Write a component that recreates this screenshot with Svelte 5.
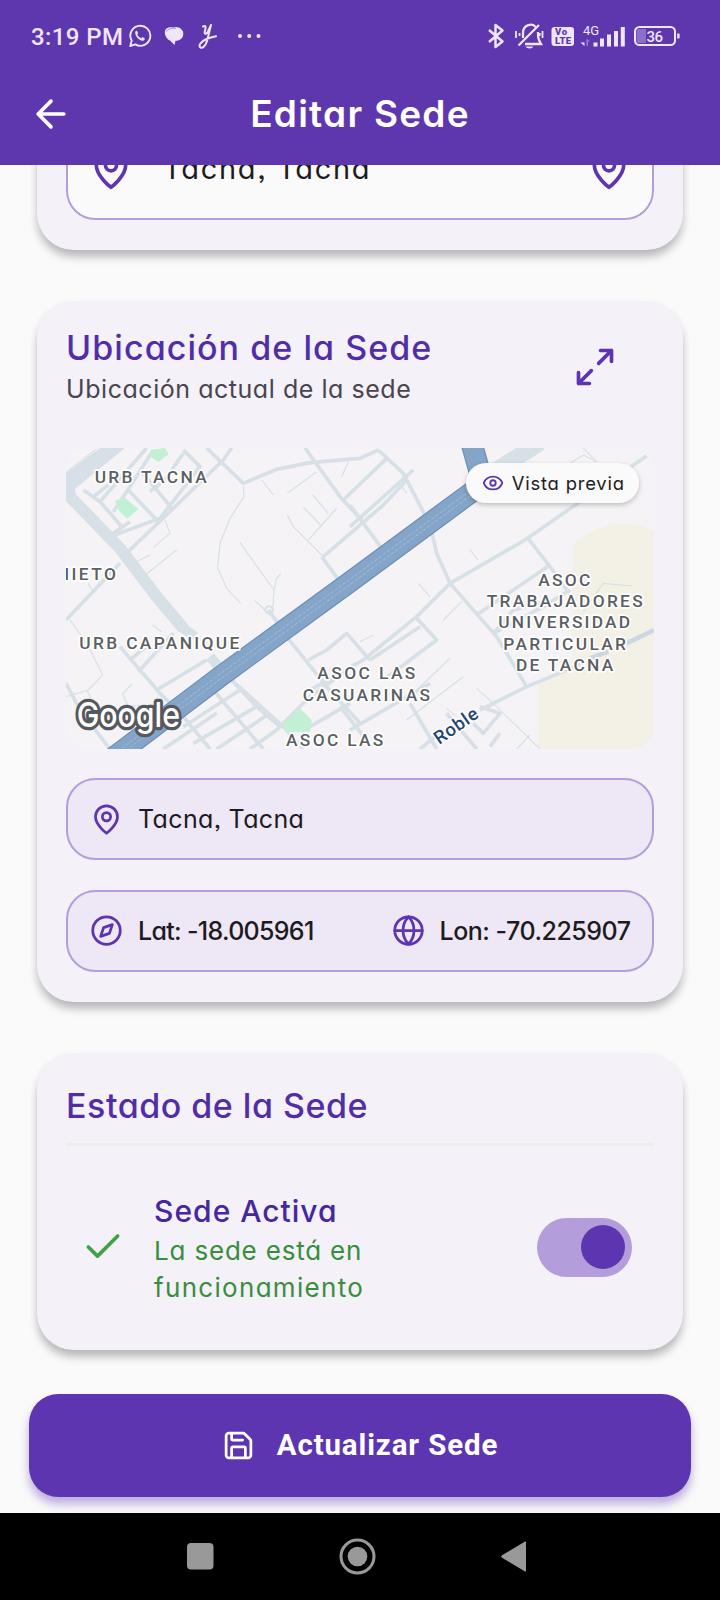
<script>
  const labels = [
    { t: 'URB TACNA', x: 134, y: 160, w: 336 },
    { t: 'URB CAPANIQUE', x: 88, y: 658, w: 480 },
    { t: 'ASOC LAS', x: 802, y: 748, w: 294 },
    { t: 'CASUARINAS', x: 758, y: 812, w: 382 },
    { t: 'ASOC LAS', x: 708, y: 949, w: 292 },
    { t: 'ASOC', x: 1465, y: 467, w: 156 },
    { t: 'TRABAJADORES', x: 1310, y: 531, w: 468 },
    { t: 'UNIVERSIDAD', x: 1345, y: 595, w: 395 },
    { t: 'PARTICULAR', x: 1360, y: 659, w: 368 },
    { t: 'DE TACNA', x: 1398, y: 723, w: 292 },
    { t: 'NIETO', x: 20, y: 451, w: 178 }
  ];

  const streets = [
    'M100 180L150 215L215 290', 'M130 200L175 165', 'M180 320L330 265L450 110L400 60', 'M235 365L520 90L545 54',
    'M150 215L290 54', 'M190 245L240 170L310 60', 'M235 180L320 270', 'M270 120L370 240', 'M300 185L345 150L400 70', 'M175 320L240 275',
    'M470 54L580 160L680 118L780 98L930 85L985 60', 'M765 54L870 200L935 270', 'M820 380L1000 225L1070 150', 'M815 380L870 455',
    'M880 210L1010 85', 'M900 225L995 355', 'M985 60L1060 130L1130 265', 'M900 290L1090 120',
    'M48 570L210 400', 'M545 750L700 890L760 957', 'M210 650L330 790L400 860L480 957', 'M240 690L300 640', 'M265 725L370 610',
    'M320 780L470 690', 'M400 890L570 780', 'M490 780L640 957', 'M340 957L500 850', 'M430 940L620 830', 'M500 957L660 850',
    'M710 620L830 770L930 880', 'M775 690L830 660L890 610L960 690', 'M655 540L685 580', 'M545 750L620 830L690 890', 'M600 957L680 900L780 800L920 700',
    'M780 780L940 690L1100 560L1200 460L1425 330L1590 215L1790 78', 'M960 690L1110 590', 'M1100 565L1160 630L1000 750', 'M1145 305L1160 370L1200 460L1340 620L1430 770',
    'M1430 320L1500 410L1550 480', 'M1280 555L1500 405', 'M1330 610L1480 530L1560 480', 'M1330 610L1390 540L1470 520', 'M1290 840L1430 770L1600 700',
    'M900 900L1020 830L1140 760', 'M780 890L900 820', 'M870 830L950 930', 'M1080 820L1160 957', 'M1290 830L1350 850L1300 910L1270 880',
    'M1110 957L1180 900', 'M1190 850L1280 957', 'M1320 950L1350 910', 'M48 760L90 840L180 957'
  ];

  const lanes = [
    'M580 170L582 200L540 265L510 340L503 415L530 475L572 520', 'M570 338L672 480L668 545', 'M672 480L680 445L692 432', 'M615 512L660 555',
    'M712 255L730 290L820 380', 'M775 330L860 235', 'M760 232L812 285', 'M788 195L835 250', 'M635 150L670 195', 'M712 190L800 125',
    'M345 270L360 310L310 352', 'M285 435L380 360', 'M250 400L300 375', 'M60 570L110 640L158 735L115 780L48 800', 'M115 460L125 480',
    'M245 762L218 792L235 830L270 825', 'M110 780L130 820', 'M308 585L335 605', 'M1260 360L1285 390', 'M1105 460L1140 500', 'M1180 570L1235 515',
    'M930 635L970 615', 'M1070 870L1200 770L1240 740', 'M1100 780L1200 685', 'M1280 775L1340 830L1470 957', 'M1400 957L1440 915', 'M1600 545L1660 460L1745 468',
    'M1560 100L1600 75L1640 95', 'M1600 54L1640 95', 'M1190 835L1220 860', 'M875 140L895 95', 'M1045 155L1070 190'
  ];
</script>

{#snippet pin()}
  <path d="M20 10c0 6-8 12-8 12s-8-6-8-12a8 8 0 0 1 16 0Z" /><circle cx="12" cy="10" r="3" />
{/snippet}

<div class="screen">
  <header>
    <div class="status">
      <span class="time">3:19 PM</span>
      <svg class="wa" width="24" height="24" viewBox="0 0 24 24" fill="none" stroke="#efe6fb" stroke-width="1.9">
        <path d="M2.2 22l1.5-5.2a10 10 0 1 1 3.6 3.6z" stroke-linejoin="round" />
        <path d="M7.4 7.6c.6-1 1.5-1 1.8-.3l.9 1.9-.8 1.3c.8 1.8 2.100 3 3.900 3.800l1.200-1.200 2.100 1.100c.7.4.2 1.700-.8 2.300-3.500 1.500-9.700-4.700-8.300-8.900z" fill="#efe6fb" stroke="none" />
      </svg>
      <svg class="bubble" width="20" height="20" viewBox="0 0 20 20">
        <path d="M9 1.500C12 .3 17 1 19 5.500c1.200 5-1.500 9.300-7.500 9.300L10.500 19 6 14.500C1.500 12.500-1 5.500 2.500 2.500c2-1.500 4.500-1.600 6.500-1z" fill="#efe6fb" />
        <path d="M2 5.500C4 2.800 8 2 12 2.300" fill="none" stroke="#9a7fce" stroke-width=".8" />
      </svg>
      <svg class="why" width="20" height="26" viewBox="0 0 20 26" fill="none" stroke="#efe6fb" stroke-width="2" stroke-linecap="round" stroke-linejoin="round">
        <path d="M5 3.500C8 2 8 4.500 7 7.500c-1 3 0 4.500 2.500 2L13 2 9 18c-1.500 5-4.500 7.500-6.500 6.500C0 23 2.500 18.500 8.500 16c4-1.600 6-2 9.500-2.700" />
      </svg>
      <svg class="dots" width="24" height="6" viewBox="0 0 24 6" fill="#efe6fb"><circle cx="3" cy="3" r="2" /><circle cx="12.200" cy="3" r="2" /><circle cx="21.500" cy="3" r="2" /></svg>
      <svg class="right" width="194" height="28" viewBox="487 22 194 28" fill="none" stroke="#efe6fb" stroke-width="2.500">
        <path d="M489 30L502.500 41.500L495.500 47V25L502.500 30.500L489 42" stroke-linejoin="round" />
        <path d="M518.500 45.500L539 25M523 38V33c0-9 10-10 12.500-6M538 32c0 5 0 7 3 12H525" stroke-width="2.300" />
        <path d="M516 31v7M519.500 33v3M542.500 31v7M539.700 33v3" stroke-width="1.800" />
        <path d="M525.500 46.500h8c-1.500 2.500-6.500 2.500-8 0z" fill="#efe6fb" stroke="none" />
        <rect x="551.500" y="27" width="22.500" height="19" rx="3" fill="#efe6fb" stroke="none" />
        <text x="555" y="35.200" class="volte" textLength="12">Vo</text>
        <text x="555" y="44.200" class="volte" textLength="16">LTE</text>
        <text x="583" y="35" class="net" textLength="16">4G</text>
        <path d="M584.500 38.500v7.500l-4-3.500h4z" fill="#efe6fb" stroke="none" />
        <path d="M586.500 46v-7.500l3.500 3h-2v4.500z" fill="#9a7fce" stroke="none" />
        <path d="M595.500 42.500v4M602 38.500v8M609 34.500v12M616 31v15.500M622.800 27v19.500" stroke-width="4" />
        <path d="M638 29h8v14h-8a2 2 0 0 1-1.500-2V31a2 2 0 0 1 1.500-2z" fill="#8c6fc8" stroke="none" />
        <rect x="635" y="27" width="40" height="18" rx="4.500" stroke-width="2" />
        <path d="M677.200 33.500h1.400q1 0 1 1v3q0 1-1 1h-1.400z" fill="#efe6fb" stroke="none" />
        <text x="646.500" y="41.500" class="bat" textLength="16.500">36</text>
      </svg>
    </div>
    <div class="appbar">
      <svg class="back" width="44" height="44" viewBox="0 0 24 24"><path d="M12 19l-7-7 7-7M19 12H5" /></svg>
      <h1>Editar Sede</h1>
    </div>
  </header>

  <main>
    <section class="card first">
      <div class="input">
        <svg width="44" height="44" viewBox="0 0 24 24">{@render pin()}</svg>
        <span>Tacna, Tacna</span>
        <svg width="44" height="44" viewBox="0 0 24 24">{@render pin()}</svg>
      </div>
    </section>

    <section class="card place">
      <div class="head">
        <div>
          <h2 class="t-ubi">Ubicación de la Sede</h2>
          <p>Ubicación actual de la sede</p>
        </div>
        <svg class="expand" width="44" height="44" viewBox="0 0 24 24"><path d="M15 3h6v6M9 21H3v-6M21 3l-7 7M3 21l7-7" /></svg>
      </div>

      <div class="map">
        <svg class="tiles" width="588" height="301" viewBox="48 54 1764 903" preserveAspectRatio="none">
          <rect x="48" y="54" width="1764" height="903" fill="#f5f3f5" />
          <path d="M1568 345Q1610 305 1660 292Q1725 265 1812 302V957H1465V760L1568 690Z" fill="#f3f0e5" />
          <g fill="none" stroke="#d6e0e6" stroke-linejoin="round">
            {#each lanes as d}<path {d} stroke-width="3.500" />{/each}
            {#each streets as d}<path {d} stroke-width="11" />{/each}
            <circle cx="657" cy="540" r="11" stroke-width="6" />
            <path d="M1730 640L1812 600M1620 685L1675 665" stroke-width="14" stroke="#cbd7e2" />
            <path d="M205 30L40 165" stroke-width="62" />
            <path d="M48 54L150 54L48 130Z" fill="#f5f3f5" stroke="none" />
            <path d="M48 128L140 56" stroke="#bfccd6" stroke-width="2" />
            <path d="M55 160L60 200L210 355L320 500L400 595" stroke-width="36" />
            <path d="M395 590L435 620M480 680L510 715" stroke-width="30" />
            <path d="M1470 38L1340 120" stroke-width="50" />
          </g>
          <path d="M303 60L345 54L356 72L325 96L303 82Z M195 212L225 203L265 238L232 266L208 244Z M700 880L752 838L785 870L780 905H705Z" fill="#c2f0d5" />
          <g fill="none">
            <path d="M1262 30L1290 130" stroke="#6b8db8" stroke-width="66" />
            <path d="M1262 30L1290 130" stroke="#85a5c8" stroke-width="59" />
            <path d="M180 990L510 740L890 463L1290 168" stroke="#6b8db8" stroke-width="64" />
            <path d="M180 990L510 740L890 463L1290 168" stroke="#85a5c8" stroke-width="57" />
            <path d="M180 982L510 732L890 455L1290 160M180 998L510 748L890 471L1290 176" stroke="#b5cbe0" stroke-width="1.800" stroke-dasharray="10 5" />
          </g>
          <g class="labels">
            {#each labels as l}<text x={l.x} y={l.y} textLength={l.w}>{l.t}</text>{/each}
          </g>
          <text class="road" transform="translate(1168 945) rotate(-35)" textLength="148">Roble</text>
          <text class="google" x="80" y="892" textLength="310" lengthAdjust="spacingAndGlyphs">Google</text>
        </svg>
        <div class="chip">
          <svg width="22" height="22" viewBox="0 0 24 24"><path d="M2.060 12.350a1 1 0 0 1 0-.7 10.750 10.750 0 0 1 19.880 0 1 1 0 0 1 0 .7 10.750 10.750 0 0 1-19.880 0" /><circle cx="12" cy="12" r="3" /></svg>
          <span>Vista previa</span>
        </div>
      </div>

      <div class="info">
        <svg width="33" height="33" viewBox="0 0 24 24">{@render pin()}</svg>
        <span class="city">Tacna, Tacna</span>
      </div>
      <div class="info coords">
        <div>
          <svg width="33" height="33" viewBox="0 0 24 24"><circle cx="12" cy="12" r="10" /><path d="M16.240 7.760l-2.120 6.360-6.360 2.120 2.120-6.360z" /></svg>
          <span class="lat">Lat: -18.005961</span>
        </div>
        <div>
          <svg width="33" height="33" viewBox="0 0 24 24"><circle cx="12" cy="12" r="10" /><path d="M12 2a14.500 14.500 0 0 0 0 20 14.500 14.500 0 0 0 0-20M2 12h20" /></svg>
          <span class="lon">Lon: -70.225907</span>
        </div>
      </div>
    </section>

    <section class="card state">
      <h2 class="t-est">Estado de la Sede</h2>
      <hr />
      <div class="row">
        <svg class="check" width="44" height="44" viewBox="0 0 24 24"><path d="M20 6L9 17l-5-5" /></svg>
        <div class="desc">
          <h3>Sede Activa</h3>
          <p class="l1">La sede está en</p>
          <p class="l2">funcionamiento</p>
        </div>
        <div class="switch"><i></i></div>
      </div>
    </section>

    <button>
      <svg width="33" height="33" viewBox="0 0 24 24"><path d="M15.200 3a2 2 0 0 1 1.400.6l3.800 3.800a2 2 0 0 1 .6 1.400V19a2 2 0 0 1-2 2H5a2 2 0 0 1-2-2V5a2 2 0 0 1 2-2zM17 21v-7a1 1 0 0 0-1-1H8a1 1 0 0 0-1 1v7M7 3v4a1 1 0 0 0 1 1h7" /></svg>
      <span>Actualizar Sede</span>
    </button>
  </main>

  <nav>
    <svg width="27" height="27" viewBox="0 0 27 27"><rect width="26.500" height="26.500" rx="4" fill="#999" /></svg>
    <svg class="home" width="37" height="37" viewBox="0 0 37 37"><circle cx="18.500" cy="18.500" r="16.500" fill="none" stroke="#999" stroke-width="3" /><circle cx="18.500" cy="18.500" r="9.800" fill="#999" /></svg>
    <svg class="prev" width="26" height="31" viewBox="0 0 26 31"><path d="M1 14.200L24 .6q1-.5 1 .6v28.600q0 1.100-1 .6L1 16.800q-1.500-1.300 0-2.600z" fill="#999" /></svg>
  </nav>
</div>

<style>
  :global(body) { background: #fafafa; }
  * { box-sizing: border-box; }
  h1, h2, h3, p { margin: 0; font-weight: 400; white-space: nowrap; }
  .screen {
    width: 720px; height: 1600px; display: flex; flex-direction: column; overflow: hidden;
    background: #fafafa; color: #1d1b20;
    font-family: Inter, "Open Sans", sans-serif; font-feature-settings: "cv11", "ss03";
  }
  header { height: 165px; background: #5e37ae; flex: none; }
  .status { height: 72px; display: flex; align-items: center; padding-left: 31px; }
  .time { font: 500 24px/28px Roboto, sans-serif; color: #efe6fb; width: 97px; letter-spacing: .4px; padding-top: 2px; white-space: nowrap; }
  .bubble { margin-left: 12px; }
  .why { margin-left: 14px; }
  .dots { margin-left: 19px; }
  .right { margin-left: 226px; }
  .volte, .net, .bat { font-family: Roboto, sans-serif; stroke: none; }
  .volte { font-size: 9.500px; font-weight: 900; fill: #5e37ae; }
  .net { font-size: 13px; fill: #efe6fb; }
  .bat { font-size: 15px; font-weight: 500; fill: #efe6fb; }
  .appbar { display: grid; grid-template-columns: 44px 1fr 44px; align-items: center; padding: 0 29px; height: 84px; }
  .appbar h1 { text-align: center; color: #fff; font-size: 37px; line-height: 44px; font-weight: 600; letter-spacing: 1.250px; }
  svg { flex: none; display: block; }
  .back, .input svg, .expand, .chip svg, .info svg, .check, button svg {
    fill: none; stroke: #5e35b1; stroke-width: 2; stroke-linecap: round; stroke-linejoin: round;
  }
  .back { stroke: #fff; }

  main { height: 1348px; flex: none; overflow: hidden; display: flex; flex-direction: column; }
  .card {
    flex: none; margin: 0 36.700px; padding: 29.400px; border-radius: 36.700px; background: #f4f1f9;
    box-shadow: 0 8px 10px -1px rgba(0, 0, 0, .22), 0 4px 8px rgba(0, 0, 0, .08);
  }
  .first { margin-top: -77px; height: 162px; padding-top: 29px; }
  .input {
    height: 103px; border: 2px solid #b39ddb; border-radius: 29.400px; background: #fafafa;
    display: flex; align-items: center; padding: 0 20.500px;
  }
  .input span { flex: 1; margin-left: 30.500px; font-size: 29px; letter-spacing: 1.700px; white-space: nowrap; }

  .place { margin-top: 51px; height: 700.500px; }
  .head { height: 117.600px; display: flex; justify-content: space-between; }
  h2 { font-size: 34px; line-height: 36px; font-weight: 500; color: #512da8; }
  .t-ubi { letter-spacing: 1.050px; }
  .head p { margin-top: 4px; font-size: 25px; line-height: 38px; color: #49454f; letter-spacing: .540px; }
  .expand { margin: 15px 37px 0 0; }

  .map { position: relative; height: 301px; border-radius: 22px; overflow: hidden; }
  .labels text { font: 500 52px Roboto, sans-serif; fill: #5b5e63; stroke: #fff; stroke-width: 10px; paint-order: stroke; stroke-linejoin: round; }
  .road { font: 500 55px Roboto, sans-serif; fill: #234574; stroke: #fff; stroke-width: 8px; paint-order: stroke; }
  .google { font: 500 103px Inter, sans-serif; fill: #fff; stroke: #55585c; stroke-width: 20px; paint-order: stroke; stroke-linejoin: round; }
  .chip {
    position: absolute; top: 14.700px; right: 14.700px; width: 173px; height: 40.500px; border-radius: 21px;
    background: #fafafa; box-shadow: 0 2px 5px rgba(0, 0, 0, .22); display: flex; align-items: center; padding-left: 15.500px;
  }
  .chip span { margin-left: 8px; font-size: 18.400px; color: #212121; white-space: nowrap; letter-spacing: .8px; }

  .info {
    height: 82px; margin-top: 29.500px; border: 2px solid #b39ddb; border-radius: 29.400px; background: #ede7f6;
    display: flex; align-items: center; padding-left: 22px; font-size: 25px; white-space: nowrap;
  }
  .info span { margin-left: 15px; }
  .city { letter-spacing: .350px; }
  .lat { letter-spacing: -.7px; }
  .lon { letter-spacing: -.5px; }
  .coords { font-weight: 500; }
  .coords div { display: flex; align-items: center; flex: none; width: 301.500px; }

  .state { margin-top: 51.500px; height: 297px; padding-top: 33px; }
  .t-est { line-height: 40px; letter-spacing: .5px; }
  hr { margin: 17px 0 0; border: 0; height: 3px; background: #efebee; border-radius: 2px; }
  .row { display: flex; align-items: flex-start; padding: 47px 22px 0 14.500px; }
  .check { margin-top: 32px; stroke: #43a047; }
  .desc { margin-left: 29.500px; flex: 1; }
  h3 { font-size: 30px; line-height: 36px; font-weight: 500; color: #4527a0; margin-bottom: 3px; letter-spacing: 1px; }
  .desc p { font-size: 26px; line-height: 37px; color: #388e3c; }
  .l1 { letter-spacing: .8px; }
  .l2 { letter-spacing: 1.300px; }
  .switch { margin-top: 25px; width: 95px; height: 58.800px; border-radius: 30px; background: #b39ddb; display: flex; justify-content: flex-end; padding: 7.300px; }
  .switch i { width: 44px; height: 44px; border-radius: 50%; background: #5e35b1; }

  button {
    flex: none; margin: 44px 29.400px 0; height: 102.900px; border: 0; border-radius: 29.400px; background: #5e35b1; color: #fff;
    box-shadow: 0 7px 10px rgba(94, 53, 177, .4); display: flex; align-items: center; justify-content: center; gap: 22px;
    font: 700 29.400px/36px Roboto, sans-serif; letter-spacing: .9px; padding: 0;
  }
  button svg { stroke: #fff; }

  nav { height: 87px; flex: none; background: #000; display: flex; align-items: center; padding-left: 187px; }
  .home { margin-left: 125px; }
  .prev { margin-left: 125px; }
</style>
